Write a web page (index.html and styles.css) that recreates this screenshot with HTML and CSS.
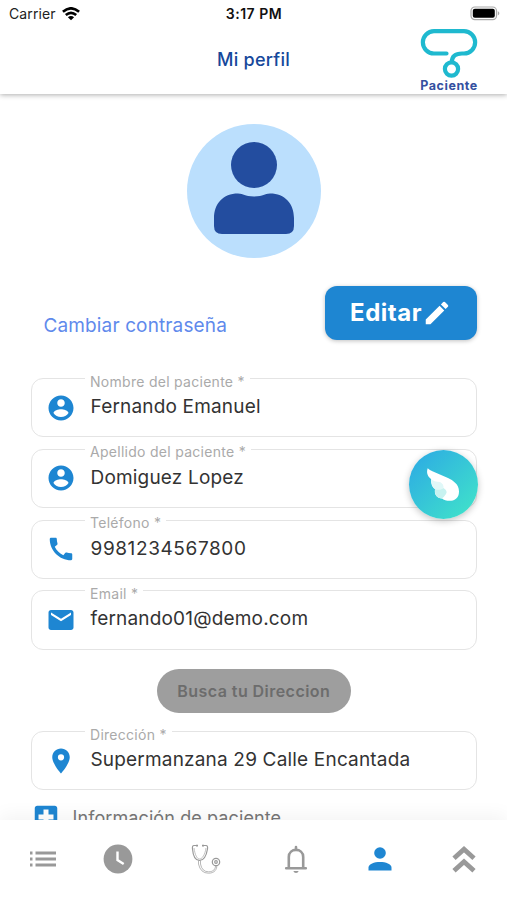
FILE: index.html
```
<!DOCTYPE html>
<html lang="es">

<head>
    <meta charset="UTF-8">
    <meta name="viewport" content="width=device-width, initial-scale=1.0">
    <title>Mi perfil</title>
    <link rel="stylesheet" href="styles.css">
</head>

<body>
    <div class="app">
        <header class="header">
            <div class="status-bar">
                <div class="carrier">
                    <span>Carrier</span>
                    <svg width="18" height="14" viewBox="0 0 18 14" fill="none" stroke="#000" stroke-width="2.6">
                        <path d="M0.9 4.8 Q9 -2.2 17.1 4.8" />
                        <path d="M3.8 8.1 Q9 3.6 14.2 8.1" />
                        <path d="M9 13.2 L5.9 10.2 Q9 7.8 12.1 10.2 Z" fill="#000" stroke="none" />
                    </svg>
                </div>
                <div class="time">3:17 PM</div>
                <svg class="battery" width="31" height="15" viewBox="0 0 31 15">
                    <rect x="1" y="1" width="25.5" height="12.6" rx="3.8" fill="#fff" stroke="#aaa" stroke-width="1.2" />
                    <rect x="2.8" y="2.8" width="22" height="9" rx="2" fill="#000" />
                    <path d="M27.8 5 Q31 7.3 27.8 9.6 Z" fill="#aaa" />
                </svg>
            </div>
            <div class="title-bar">
                <h1>Mi perfil</h1>
                <div class="logo">
                    <svg width="58" height="50" viewBox="0 0 58 50" fill="none" stroke="#1fb9cf" stroke-width="4.2" stroke-linecap="round">
                        <path d="M26.5 25.5 H14 A11 11 0 0 1 14 3.2 H44 A11 11 0 0 1 44 25.5 H42 Q32 25.5 31.8 34" />
                        <circle cx="31.5" cy="41" r="6.6" />
                    </svg>
                    <span>Paciente</span>
                </div>
            </div>
        </header>

        <main class="content">
            <div class="avatar">
                <svg width="134" height="134" viewBox="0 0 134 134" fill="#234d9f">
                    <circle cx="67" cy="41" r="23" />
                    <path d="M27 94 C27 80 36 69.5 51 69.5 C57 69.5 57 72.5 67 72.5 C77 72.5 77 69.5 83 69.5 C98 69.5 107 80 107 94 V102 Q107 110 99 110 H35 Q27 110 27 102 Z" />
                </svg>
            </div>

            <div class="actions">
                <a class="password-link" href="#">Cambiar contraseña</a>
                <button class="edit-button" type="button">
                    <span>Editar</span>
                    <svg width="30" height="30" viewBox="0 0 24 24" fill="#fff">
                        <path d="M3 17.25V21h3.75L17.81 9.94l-3.75-3.75L3 17.25zM20.71 7.04a1 1 0 0 0 0-1.41l-2.34-2.34a1 1 0 0 0-1.41 0l-1.83 1.83 3.75 3.75 1.83-1.83z" />
                    </svg>
                </button>
            </div>

            <!-- Datos del paciente -->
            <fieldset class="field">
                <legend>Nombre del paciente *</legend>
                <svg class="icon" viewBox="0 0 24 24">
                    <path d="M12 2C6.48 2 2 6.48 2 12s4.48 10 10 10 10-4.48 10-10S17.52 2 12 2zm0 3c1.66 0 3 1.34 3 3s-1.34 3-3 3-3-1.34-3-3 1.34-3 3-3zm0 14.2c-2.5 0-4.71-1.28-6-3.22.03-1.99 4-3.08 6-3.08 1.99 0 5.97 1.09 6 3.08-1.29 1.94-3.5 3.22-6 3.22z" />
                </svg>
                <span class="value">Fernando Emanuel</span>
            </fieldset>
            <fieldset class="field">
                <legend>Apellido del paciente *</legend>
                <svg class="icon" viewBox="0 0 24 24">
                    <path d="M12 2C6.48 2 2 6.48 2 12s4.48 10 10 10 10-4.48 10-10S17.52 2 12 2zm0 3c1.66 0 3 1.34 3 3s-1.34 3-3 3-3-1.34-3-3 1.34-3 3-3zm0 14.2c-2.5 0-4.71-1.28-6-3.22.03-1.99 4-3.08 6-3.08 1.99 0 5.97 1.09 6 3.08-1.29 1.94-3.5 3.22-6 3.22z" />
                </svg>
                <span class="value">Domiguez Lopez</span>
            </fieldset>
            <fieldset class="field">
                <legend>Teléfono *</legend>
                <svg class="icon" viewBox="0 0 24 24">
                    <path d="M20.01 15.38c-1.23 0-2.42-.2-3.53-.56a.98.98 0 0 0-1.01.24l-1.57 1.97c-2.83-1.35-5.48-3.9-6.89-6.83l1.95-1.66c.27-.28.35-.67.24-1.02-.37-1.11-.56-2.3-.56-3.53 0-.54-.45-.99-.99-.99H4.19C3.65 3 3 3.24 3 3.99 3 13.28 10.73 21 20.01 21c.71 0 .99-.63.99-1.18v-3.45c0-.54-.45-.99-.99-.99z" />
                </svg>
                <span class="value phone">9981234567800</span>
            </fieldset>
            <fieldset class="field">
                <legend>Email *</legend>
                <svg class="icon" viewBox="0 0 24 24">
                    <path d="M20 4H4c-1.1 0-1.99.9-1.99 2L2 18c0 1.1.9 2 2 2h16c1.1 0 2-.9 2-2V6c0-1.1-.9-2-2-2zm0 4l-8 5-8-5V6l8 5 8-5v2z" />
                </svg>
                <span class="value">fernando01@demo.com</span>
            </fieldset>

            <button class="search-button" type="button" disabled>Busca tu Direccion</button>

            <fieldset class="field">
                <legend>Dirección *</legend>
                <svg class="icon" viewBox="0 0 24 24">
                    <path d="M12 2C8.13 2 5 5.13 5 9c0 5.25 7 13 7 13s7-7.75 7-13c0-3.87-3.13-7-7-7zm0 9.5a2.5 2.5 0 0 1 0-5 2.5 2.5 0 0 1 0 5z" />
                </svg>
                <span class="value">Supermanzana 29 Calle Encantada</span>
            </fieldset>

            <div class="section-title">
                <svg width="30" height="30" viewBox="0 0 24 24" fill="#1e86d2">
                    <path d="M19 3H5c-1.1 0-1.99.9-1.99 2L3 19c0 1.1.9 2 2 2h14c1.1 0 2-.9 2-2V5c0-1.1-.9-2-2-2zm-1 11h-4v4h-4v-4H6v-4h4V6h4v4h4v4z" />
                </svg>
                <span>Información de paciente</span>
            </div>
        </main>

        <!-- Botón flotante -->
        <div class="fab">
            <svg width="69" height="69" viewBox="0 0 69 69">
                <path d="M18.7 18.3 C17 23 19 27 22 29 C22 34 23 37 26 39 C25 45 28 48 33 48.5 C37 52 50 53 50 41.5 C50 34 44 30.5 39 28 L24 21.5 Q20.5 20 18.7 18.3 Z" fill="#fff" />
                <path d="M22 29 Q25 32 31 32 Q35 34 34.5 38 Q30 40.5 26 39 Q22.5 37 22 29 Z" fill="#e0f8f8" />
                <path d="M26 39 Q31 40.5 34.5 38 Q39 41 37 44 Q35 47 33 48.5 Q25 48 26 39 Z" fill="#c8f2f0" />
            </svg>
        </div>

        <nav class="bottom-nav">
            <svg width="28" height="18" viewBox="0 0 28 18">
                <path d="M1 3h2.5M6.5 3H27M1 9h2.5M6.5 9H27M1 15h2.5M6.5 15H27" stroke="#999" stroke-width="2.8" />
            </svg>
            <svg width="30" height="30" viewBox="0 0 30 30">
                <circle cx="15" cy="15" r="14.4" fill="#999" />
                <path d="M14.5 7.5V16l6.2 4" fill="none" stroke="#fff" stroke-width="2.4" />
            </svg>
            <svg width="30" height="30" viewBox="0 0 30 30" fill="none" stroke="#999" stroke-width="1.2">
                <path d="M6 1.5H3Q1 1.5 1.5 5C2 11 4 16.5 8.5 16.5S15.5 11 16.5 5Q17 1.5 15 1.5H12" />
                <path d="M6 .7v1.8M12 .7v1.8" stroke-width="2" />
                <path d="M3 4C4 11 6 15 8.5 15S14 11 15 4" stroke-width=".6" />
                <path d="M7.5 16.5V20Q9.5 29.2 17.5 29.2C24 29.2 25.8 25 25.8 21.8M9.5 16.5V20Q11 27.8 17.5 27.8C22.5 27.8 24.5 25 24.5 21.8" stroke-width=".7" />
                <circle cx="25" cy="18" r="3.7" />
                <circle cx="25" cy="18" r="1.3" />
            </svg>
            <svg width="24" height="28" viewBox="0 0 24 28">
                <path d="M4.8 22V12C4.8 2.5 19.2 2.5 19.2 12V22" fill="none" stroke="#999" stroke-width="2.6" />
                <path d="M2.2 23.2h19.6M12 2v2" stroke="#999" stroke-width="2.6" stroke-linecap="round" />
                <path d="M9.3 26h5.4Q14 28 12 28T9.3 26z" fill="#999" />
            </svg>
            <svg width="24" height="24" viewBox="0 0 24 24" fill="#1e86d2">
                <circle cx="12" cy="6" r="5.8" />
                <path d="M.5 23.5V20.5C.5 13 23.5 13 23.5 20.5V23.5Z" />
            </svg>
            <svg width="24" height="28" viewBox="0 0 24 28" fill="none" stroke="#999" stroke-width="4.8">
                <path d="M2 13.2L12 4.2L22 13.2M2 25.8L12 16.8L22 25.8" />
            </svg>
        </nav>
    </div>
</body>

</html>
```
FILE: styles.css
```
body {
    font-family: Inter, "Liberation Sans", sans-serif;
    margin: 0;
    background-color: #fff;
}

.app {
    position: relative;
    display: flex;
    flex-direction: column;
    height: 900px;
    overflow: hidden;
}

/* Cabecera */
.header {
    flex: none;
    height: 94px;
    background-color: #fff;
    box-shadow: 0 1px 5px rgba(0, 0, 0, 0.32);
    z-index: 1;
}

.status-bar {
    display: grid;
    grid-template-columns: 1fr auto 1fr;
    align-items: center;
    height: 27px;
    padding: 0 6px 0 9px;
    font-size: 14px;
    color: #222;
}

.carrier {
    display: flex;
    align-items: center;
    gap: 6px;
    letter-spacing: 0.1px;
}

.time {
    margin-right: 2px;
    font-size: 14px;
    font-weight: 600;
    letter-spacing: 0.5px;
    color: #111;
}

.battery {
    justify-self: end;
}

.title-bar {
    display: grid;
    grid-template-columns: 1fr auto 1fr;
    align-items: start;
    padding: 1px 29px 0;
}

h1 {
    grid-column: 2;
    margin: 0;
    font-size: 18px;
    font-weight: 500;
    line-height: 64px;
    letter-spacing: 0.25px;
    color: #16489b;
}

.logo {
    display: flex;
    flex-direction: column;
    align-items: center;
    justify-self: end;
    width: 58px;
}

.logo span {
    font-size: 12.5px;
    font-weight: 700;
    line-height: 16px;
    letter-spacing: 0.55px;
    color: #3450a0;
}

/* Contenido */
.content {
    display: flex;
    flex: 1;
    flex-direction: column;
    min-height: 0;
    padding: 30px 30px 0 30.5px;
    overflow: hidden;
}

.content > * {
    flex: none;
}

.avatar {
    align-self: center;
    width: 134px;
    height: 134px;
    border-radius: 50%;
    background-color: #bbdffd;
}

.actions {
    display: flex;
    justify-content: space-between;
    height: 85px;
    margin-top: 27.5px;
    padding-left: 13px;
}

.password-link {
    margin-top: 27px;
    font-size: 19px;
    line-height: 26px;
    letter-spacing: 0.13px;
    color: #5f8aec;
    text-decoration: none;
}

.edit-button {
    display: flex;
    align-items: center;
    justify-content: center;
    width: 152px;
    height: 54px;
    padding: 0;
    border: none;
    border-radius: 12px;
    background-color: #1e86d2;
    box-shadow: 0 1px 4px rgba(0, 0, 0, 0.25);
    color: #fff;
    font-family: inherit;
    font-size: 24px;
    font-weight: 700;
    letter-spacing: 0.5px;
}

.field {
    display: flex;
    align-items: center;
    box-sizing: border-box;
    height: 66.8px;
    margin: 0 0 4px;
    padding: 6px 14px 0;
    border: 1.5px solid #e4e4e4;
    border-radius: 12px;
    color: #333;
}

.field legend {
    height: 16px;
    margin-left: 39.5px;
    padding: 0 5px;
    font-size: 14px;
    line-height: 21px;
    letter-spacing: 0.28px;
    color: #aaa;
}

.icon {
    width: 30px;
    height: 30px;
    margin-right: 15px;
    fill: #1e86d2;
}

.value {
    margin-top: -1px;
    font-size: 19px;
    line-height: 26px;
    letter-spacing: 0.18px;
}

.value.phone {
    letter-spacing: 0.6px;
}

.search-button {
    align-self: center;
    width: 194px;
    height: 44px;
    margin: 15px 0 11px;
    padding: 0;
    border: none;
    border-radius: 22px;
    background-color: #9e9e9e;
    color: #6c6c6c;
    font-family: inherit;
    font-size: 16px;
    font-weight: 600;
    letter-spacing: 0.45px;
}

.section-title {
    display: flex;
    align-items: center;
    gap: 12px;
    margin-top: 8px;
    font-size: 18px;
    letter-spacing: 0.1px;
    color: #777;
}

.fab {
    position: absolute;
    top: 450px;
    left: 409px;
    width: 69px;
    height: 69px;
    border-radius: 50%;
    background: linear-gradient(135deg, #2eaee2 10%, #3fe0cb 90%);
    box-shadow: 0 2px 7px rgba(0, 0, 0, 0.24);
}

/* Menú inferior */
.bottom-nav {
    display: grid;
    grid-template-columns: 86px 64px 112px 68px 100px 68px;
    align-items: center;
    justify-items: center;
    flex: none;
    height: 80px;
    box-sizing: border-box;
    padding-bottom: 3px;
    background-color: #fff;
    box-shadow: 0 -4px 18px rgba(0, 0, 0, 0.05);
    z-index: 1;
}
```
